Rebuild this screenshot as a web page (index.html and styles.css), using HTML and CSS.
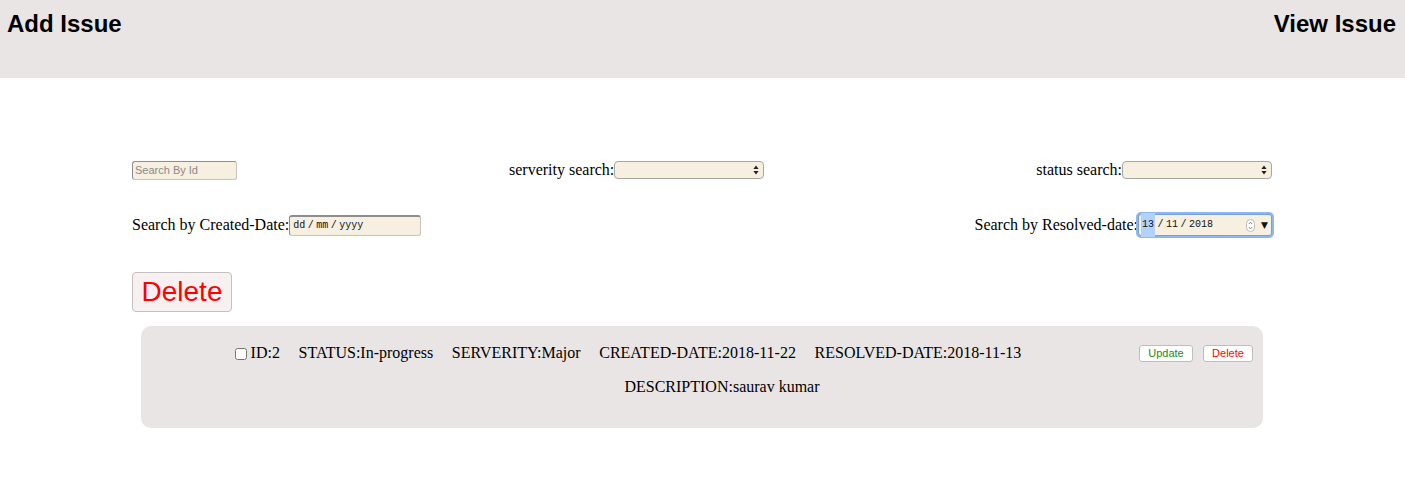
FILE: index.html
```html
<!DOCTYPE html>
<html>
<head>
<meta charset="utf-8">
<title>Issues</title>
<link rel="stylesheet" href="styles.css">
</head>
<body>
<header class="topbar">
  <a class="nav-link" href="#">Add Issue</a>
  <a class="nav-link" href="#">View Issue</a>
</header>
<main class="container">
  <div class="filter-row first">
    <input class="search-input" type="text" placeholder="Search By Id">
    <label class="field">serverity search:<span class="select-wrap"><select class="select"><option></option></select><svg class="select-arrows" width="6" height="10" viewBox="0 0 6 10"><path d="M3 0.5 L5.6 4 H0.4 Z M3 9.5 L5.6 6 H0.4 Z" fill="#222"/></svg></span></label>
    <label class="field">status search:<span class="select-wrap"><select class="select"><option></option></select><svg class="select-arrows" width="6" height="10" viewBox="0 0 6 10"><path d="M3 0.5 L5.6 4 H0.4 Z M3 9.5 L5.6 6 H0.4 Z" fill="#222"/></svg></span></label>
  </div>
  <div class="filter-row second">
    <label class="field">Search by Created-Date:<span class="date-field"><span>dd</span><span class="sep">/</span><span>mm</span><span class="sep">/</span><span>yyyy</span></span></label>
    <label class="field">Search by Resolved-date:<span class="date-field focused"><span class="sel">13</span><span class="sep">/</span><span>11</span><span class="sep">/</span><span>2018</span><span class="spacer"></span><span class="spin"><svg width="9" height="13" viewBox="0 0 9 13"><rect x="0.5" y="0.5" width="8" height="12" rx="4" fill="#fff" stroke="#bbb"/><path d="M2.8 5 L4.5 3.2 L6.2 5 M2.8 8 L4.5 9.8 L6.2 8" fill="none" stroke="#777" stroke-width="0.9"/></svg></span><span class="drop">▼</span></span></label>
  </div>
  <button class="big-delete" type="button">Delete</button>
  <section class="issue-card">
    <div class="issue-row">
      <div class="issue-fields">
        <input class="check" type="checkbox">
        <span class="f">ID:2</span>
        <span class="f">STATUS:In-progress</span>
        <span class="f">SERVERITY:Major</span>
        <span class="f">CREATED-DATE:2018-11-22</span>
        <span class="f">RESOLVED-DATE:2018-11-13</span>
      </div>
      <div class="issue-actions">
        <button class="small-btn update" type="button">Update</button>
        <button class="small-btn remove" type="button">Delete</button>
      </div>
    </div>
    <div class="issue-desc">DESCRIPTION:saurav kumar</div>
  </section>
</main>
</body>
</html>
```

FILE: styles.css
```css
* { box-sizing: border-box; }
body {
  margin: 0;
  font-family: "Liberation Serif", "Times New Roman", serif;
  font-size: 16px;
  color: #000;
  background: #fff;
}
.topbar {
  height: 78px;
  background: #e9e5e4;
  display: flex;
  justify-content: space-between;
  align-items: flex-start;
  padding: 10px 9px 0 7px;
}
.nav-link {
  font-family: "Liberation Sans", Arial, sans-serif;
  font-weight: bold;
  font-size: 24px;
  line-height: 28px;
  color: #000;
  text-decoration: none;
}
.container {
  padding: 0 133px 0 132px;
}
.filter-row {
  display: flex;
  justify-content: space-between;
  align-items: center;
}
.filter-row.first { margin-top: 82px; height: 20px; }
.filter-row.second { margin-top: 34px; height: 22px; }
.field {
  display: flex;
  align-items: center;
  line-height: 18px;
}
.search-input {
  width: 105px;
  height: 19px;
  margin: 0;
  padding: 0 2px;
  border: 1px solid #c8c4bc;
  border-top-color: #8e8e8e;
  border-left-color: #8e8e8e;
  border-radius: 3px;
  background: #f7efe0;
  font-family: "Liberation Sans", Arial, sans-serif;
  font-size: 11px;
}
.search-input::placeholder { color: #8a8a8a; }
.select-wrap {
  position: relative;
  display: inline-flex;
}
.select {
  appearance: none;
  -webkit-appearance: none;
  width: 150px;
  height: 18px;
  margin: 0;
  border: 1px solid #a9a6a0;
  border-radius: 4px;
  background: #f7efe0;
  font-size: 11px;
}
.select-arrows {
  position: absolute;
  right: 5px;
  top: 4px;
  pointer-events: none;
}
.date-field {
  display: inline-flex;
  align-items: center;
  width: 132px;
  height: 21px;
  padding: 0 3px;
  border: 1px solid #c8c4bc;
  border-top: 2px solid #8e8e8e;
  border-left: 1px solid #8e8e8e;
  border-radius: 3px;
  background: #f7efe0;
  font-family: "Liberation Mono", "Courier New", monospace;
  font-size: 10px;
  color: #111;
}
.date-field .sep { margin: 0 2.5px; }
.date-field.focused {
  width: 134px;
  height: 22px;
  border: 1px solid #7a9fd6;
  box-shadow: 0 0 0 2px #8db7f2;
  padding: 0 3px 0 2px;
}
.date-field .sel {
  background: #b3d2fb;
  padding: 3px 1px;
}
.date-field .spacer { flex: 1; }
.date-field .spin { display: inline-flex; margin-right: 6px; }
.date-field .drop {
  font-family: "DejaVu Sans", sans-serif;
  font-size: 9px;
  color: #111;
}
.big-delete {
  display: block;
  margin-top: 36px;
  width: 100px;
  height: 40px;
  padding: 0;
  border: 1px solid #c4c0c0;
  border-radius: 4px;
  background: #f7f0f0;
  color: #ff0000;
  font-family: "Liberation Sans", Arial, sans-serif;
  font-size: 28px;
  line-height: 38px;
}
.issue-card {
  margin: 14px 9px 0;
  background: #e9e5e4;
  border-radius: 10px;
  padding: 18px 10px 32px 94px;
}
.issue-row {
  display: flex;
  justify-content: space-between;
  align-items: center;
  height: 18px;
}
.issue-fields {
  display: flex;
  align-items: center;
  gap: 18.6px;
  line-height: 18px;
}
.check {
  width: 12px;
  height: 12px;
  margin: 1px -15px 0 0;
}
.issue-actions {
  display: flex;
  gap: 10px;
}
.small-btn {
  height: 17px;
  padding: 0 6px;
  background: #fff;
  border: 1px solid #bdbdbd;
  border-radius: 3px;
  font-family: "Liberation Sans", Arial, sans-serif;
  font-size: 11px;
  line-height: 15px;
}
.small-btn.update { color: #1e8a1e; width: 54px; }
.small-btn.remove { color: #ff0000; width: 50px; }
.issue-desc {
  margin-top: 16px;
  line-height: 18px;
  text-align: center;
  padding-left: 40px;
  margin-left: -84px;
}
```
